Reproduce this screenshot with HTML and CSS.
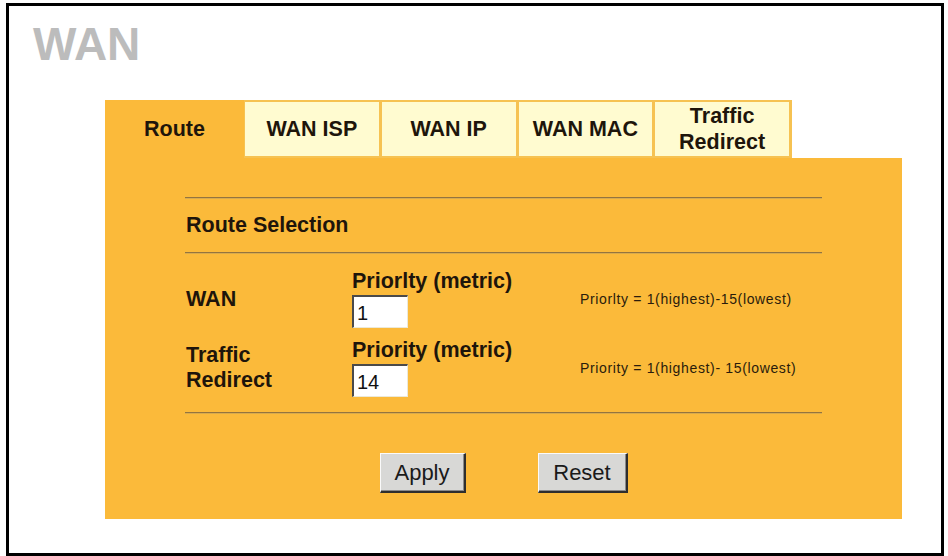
FILE: index.html
```html
<!DOCTYPE html>
<html>
<head>
<meta charset="utf-8">
<title>WAN</title>
<link rel="stylesheet" href="styles.css">
</head>
<body>
<div class="frame">
  <div class="title">WAN</div>
  <div class="panel">
    <div class="tabs">
      <div class="tab tab-active">Route</div>
      <div class="tab">WAN ISP</div>
      <div class="tab">WAN IP</div>
      <div class="tab">WAN MAC</div>
      <div class="tab tab-two">Traffic<br>Redirect</div>
    </div>
    <div class="body">
      <div class="rule"></div>
      <div class="section">Route Selection</div>
      <div class="rule"></div>
      <div class="grid">
        <div class="label">WAN</div>
        <div class="field">
          <div class="field-label">Priorlty (metric)</div>
          <input class="input" type="text" value="1">
        </div>
        <div class="help">Priorlty = 1(highest)-15(lowest)</div>

        <div class="label label-two">Traffic<br>Redirect</div>
        <div class="field">
          <div class="field-label">Priority (metric)</div>
          <input class="input" type="text" value="14">
        </div>
        <div class="help">Priority = 1(highest)- 15(lowest)</div>
      </div>
      <div class="rule rule-last"></div>
      <div class="buttons">
        <button class="btn btn-apply" type="button">Apply</button>
        <button class="btn btn-reset" type="button">Reset</button>
      </div>
    </div>
  </div>
</div>
</body>
</html>
```
FILE: styles.css
```css
html, body {
  margin: 0;
  background: #ffffff;
}
body {
  padding: 3px 0 0 6px;
  font-family: "Liberation Sans", Arial, sans-serif;
  color: #1e150b;
}
.frame {
  box-sizing: border-box;
  width: 938px;
  height: 553px;
  border: 3px solid #000000;
  background: #ffffff;
  overflow: hidden;
}
.title {
  margin: 15px 0 0 24px;
  font-size: 46px;
  line-height: 46px;
  font-weight: bold;
  color: #bcbcbc;
}
.panel {
  margin: 33px 0 0 96px;
  width: 797px;
}
.tabs {
  display: flex;
  width: 687px;
  height: 58px;
  box-sizing: border-box;
  background: #f6c252;
  padding: 2px 3px 2px 0;
}
.tab {
  flex: 1;
  margin-left: 3px;
  display: flex;
  align-items: center;
  justify-content: center;
  text-align: center;
  background: #fffbd0;
  font-size: 21.5px;
  font-weight: bold;
  line-height: 26px;
}
.tab-active {
  flex: 0 0 139px;
  margin: -2px 0 -2px 0;
  background: #fbba3a;
}
.tab-active + .tab {
  margin-left: 1px;
}
.body {
  background: #fbba3a;
  padding: 39px 80px 26px 80px;
}
.rule {
  border-top: 1px solid #93743f;
  border-bottom: 1px solid #d9ab4c;
}
.section {
  height: 53px;
  display: flex;
  align-items: center;
  padding-left: 1px;
  font-size: 21.5px;
  font-weight: bold;
}
.grid {
  display: grid;
  grid-template-columns: 166px 228px 1fr;
  row-gap: 11px;
  padding: 16px 0 15px 1px;
  align-items: center;
}
.label {
  font-size: 21.5px;
  font-weight: bold;
  line-height: 25px;
}
.field-label {
  font-size: 21.5px;
  font-weight: bold;
  line-height: 22px;
  white-space: nowrap;
}
.input {
  display: block;
  box-sizing: border-box;
  margin: 3px 0 0 0;
  width: 56px;
  height: 33px;
  padding: 2px 0 0 3px;
  background: #ffffff;
  border-style: solid;
  border-width: 2px 1px 1px 2px;
  border-color: #4a4a4a #ece9d8 #ece9d8 #4a4a4a;
  font-family: "Liberation Sans", Arial, sans-serif;
  font-size: 20px;
  color: #111111;
  outline: none;
}
.help {
  font-size: 14px;
  letter-spacing: 0.65px;
  color: #2a1c0c;
  white-space: nowrap;
}
.buttons {
  display: flex;
  justify-content: center;
  gap: 72px;
  margin-top: 39px;
}
.btn {
  box-sizing: border-box;
  height: 40px;
  padding: 0;
  background: #d8d8d6;
  border-style: solid;
  border-width: 1px 2px 2px 1px;
  border-color: #fafafa #2e2e2e #2e2e2e #fafafa;
  box-shadow: inset -1px -1px 0 #8a8a8a;
  font-family: "Liberation Sans", Arial, sans-serif;
  font-size: 22px;
  color: #1a1a1a;
}
.btn-apply {
  width: 86px;
}
.btn-reset {
  width: 90px;
}
```
